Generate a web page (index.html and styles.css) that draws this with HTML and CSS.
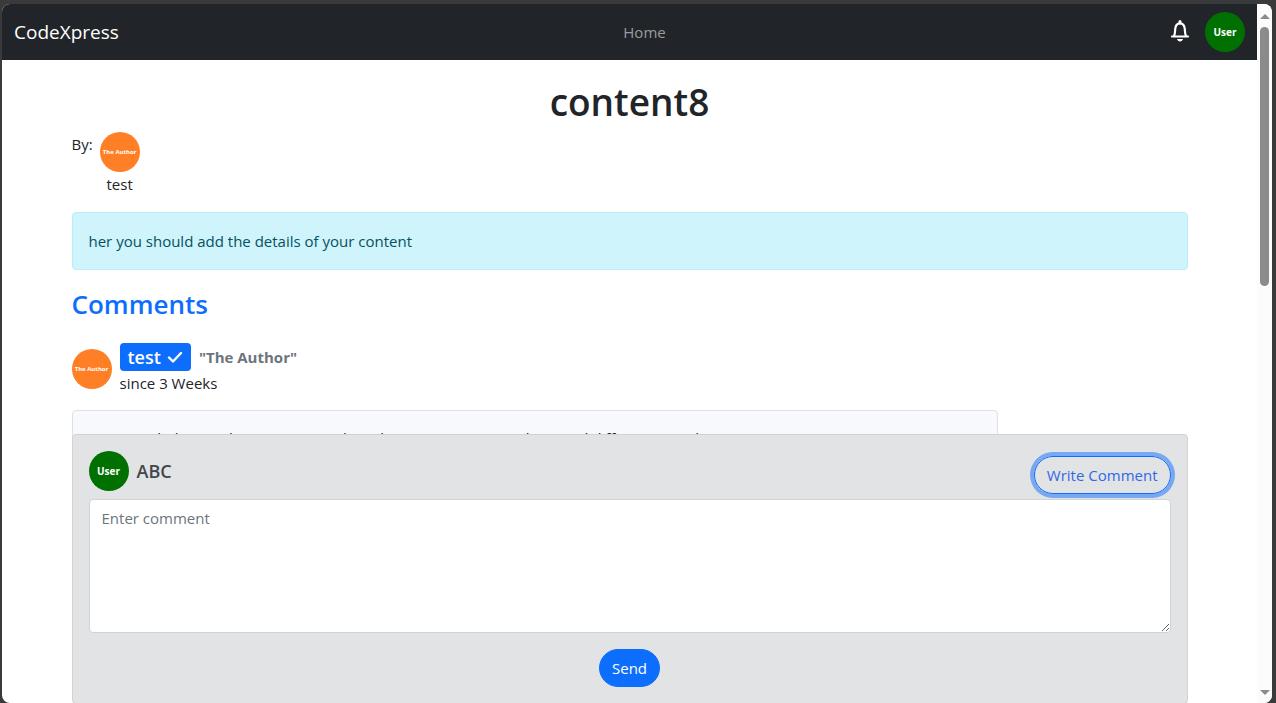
FILE: index.html
```
<!DOCTYPE html>
<html lang="en">
<head>
  <meta charset="UTF-8" />
  <meta name="viewport" content="width=device-width, initial-scale=1.0"/>
  <title>CodeXpress</title>
  <link rel="stylesheet" href="styles.css">
</head>
<body>

  <div class="window">
    <div class="page">

      <!-- Navbar -->
      <header class="navbar">
        <a href="#" class="brand">CodeXpress</a>
        <nav><a href="#" class="nav-link">Home</a></nav>
        <div class="nav-right">
          <button type="button" class="bell" aria-label="Notifications">
            <svg width="20" height="24" viewBox="0 0 20 24" fill="none" stroke="#fff" stroke-width="2.200">
              <path d="M2 16.500h16M4 16c1.100-2 1-4.200 1.200-7C5.500 5.300 7 3.300 10 3.300s4.500 2 4.800 5.700c.2 2.800.1 5 1.200 7" stroke-linecap="round"/>
              <path d="M10 1.500v1.500" stroke-width="3" stroke-linecap="round"/>
              <path d="M7 19h6c-.4 1.600-1.500 2.500-3 2.500s-2.600-.9-3-2.500z" fill="#fff" stroke="none"/>
            </svg>
          </button>
          <a href="#" class="avatar avatar-user">User</a>
        </div>
      </header>

      <!-- Content -->
      <main class="container">
        <h1>content8</h1>
        <div class="author">
          <span>By:</span>
          <a href="#" class="author-link">
            <span class="avatar avatar-author">The Author</span>
            <span>test</span>
          </a>
        </div>
        <div class="alert">her you should add the details of your content</div>

        <h2>Comments</h2>
        <article class="comment">
          <div class="comment-head">
            <span class="avatar avatar-author">The Author</span>
            <div>
              <div class="comment-name">
                <span class="badge">test
                  <svg width="16" height="14" viewBox="0 0 16 14" fill="none" stroke="#fff" stroke-width="2.400" stroke-linecap="round" stroke-linejoin="round">
                    <path d="M2 7.500l4 4L14 3"/>
                  </svg>
                </span>
                <strong>"The Author"</strong>
              </div>
              <div>since 3 Weeks</div>
            </div>
          </div>
          <p class="comment-body">you are a help even here so now we have been on many more here and different ways here</p>
        </article>
      </main>

      <!-- Comment form -->
      <div class="composer">
        <div class="container">
          <form class="composer-card">
            <div class="composer-head">
              <span class="avatar avatar-user">User</span>
              <label for="comment">ABC</label>
              <button type="button" class="btn btn-outline">Write Comment</button>
            </div>
            <textarea id="comment" rows="5" placeholder="Enter comment"></textarea>
            <button type="button" class="btn btn-primary">Send</button>
          </form>
        </div>
      </div>
    </div>

    <!-- Scrollbar -->
    <div class="scrollbar">
      <span class="arrow-up"></span>
      <span class="thumb"></span>
      <span class="arrow-down"></span>
    </div>
  </div>

</body>
</html>
```
FILE: styles.css
```
* {
  margin: 0;
  padding: 0;
  box-sizing: border-box;
}

body {
  height: 100vh;
  padding: 4px 4px 0 2px;
  overflow: hidden;
  background: #3a3a3a;
  color: #212529;
  font-family: 'Open Sans', sans-serif;
  font-size: 15px;
  line-height: 24px;
}

a {
  color: inherit;
  text-decoration: none;
}

.window {
  height: 100%;
  display: flex;
  overflow: hidden;
  border-radius: 8px;
  background: white;
}

.page {
  flex: 1;
  position: relative;
  overflow: hidden;
}

/* Navbar */
.navbar {
  height: 56px;
  padding: 0 12px;
  display: grid;
  grid-template-columns: 1fr auto 1fr;
  align-items: center;
  background: #212529;
  color: white;
}

.brand {
  font-size: 19px;
}

.nav-link {
  margin-left: 30px;
  color: #9b9d9e;
}

.nav-right {
  display: flex;
  align-items: center;
  justify-content: flex-end;
  gap: 15px;
}

.bell {
  display: flex;
  border: none;
  background: none;
  cursor: pointer;
}

.avatar {
  width: 40px;
  height: 40px;
  flex: none;
  display: flex;
  align-items: center;
  justify-content: center;
  border-radius: 50%;
  color: white;
  font-weight: 700;
  white-space: nowrap;
}

.avatar-user {
  background: #007000;
  font-size: 10px;
}

.avatar-author {
  background: #ff7f27;
  font-size: 6px;
  line-height: 8px;
}

/* Content */
.container {
  max-width: 1140px;
  margin: 0 auto;
  padding: 0 12px;
}

h1 {
  padding-top: 18px;
  margin-bottom: 6px;
  font-size: 37px;
  line-height: 48px;
  font-weight: 600;
  text-align: center;
}

.author {
  display: flex;
  gap: 7px;
}

.author-link {
  display: flex;
  flex-direction: column;
  align-items: center;
}

.alert {
  margin: 16px 0;
  padding: 16px;
  border: 1px solid #b6effb;
  border-radius: 4px;
  background: #cff4fc;
  color: #055160;
}

h2 {
  margin-bottom: 21px;
  color: #0d6efd;
  font-size: 26px;
  line-height: 36px;
  font-weight: 600;
}

.comment-head {
  display: flex;
  align-items: center;
  gap: 8px;
}

.comment-name {
  display: flex;
  align-items: center;
  gap: 8px;
}

.comment-name strong {
  color: #6c757d;
}

.badge {
  display: flex;
  align-items: center;
  gap: 6px;
  padding: 2px 8px;
  border-radius: 4px;
  background: #0d6efd;
  color: white;
  font-size: 18px;
  font-weight: 600;
}

.comment-body {
  width: 83%;
  margin-top: 15px;
  padding: 15px 16px;
  border: 1px solid #dee2e6;
  border-radius: 4px;
  background: #f7f9fc;
}

/* Comment form, stays over the page content */
.composer {
  position: absolute;
  left: 0;
  right: 0;
  bottom: -1px;
}

.composer-card {
  display: flex;
  flex-direction: column;
  padding: 16px;
  border: 1px solid #d0d2d5;
  border-radius: 4px;
  background: #e2e3e5;
}

.composer-head {
  display: flex;
  align-items: flex-start;
  gap: 8px;
}

.composer-head label {
  flex: 1;
  color: #41464b;
  font-size: 18px;
  line-height: 40px;
  font-weight: 600;
}

textarea {
  width: 100%;
  padding: 6px 12px;
  border: 1px solid #ced4da;
  border-radius: 4px;
  background: white;
  color: #212529;
  font: inherit;
}

textarea::placeholder {
  color: #6c757d;
}

.btn {
  padding: 6px 12px;
  border: 1px solid #0d6efd;
  border-radius: 20px;
  font: inherit;
  cursor: pointer;
}

.btn-outline {
  margin: 5px 0;
  background: transparent;
  color: #2f69e6;
  box-shadow: 0 0 0 4px #78a8f1;
}

.btn-primary {
  align-self: center;
  margin-top: 16px;
  background: #0d6efd;
  color: white;
}

/* Scrollbar */
.scrollbar {
  width: 15px;
  display: flex;
  flex-direction: column;
  align-items: center;
  padding: 10px 0 8px;
  background: #fcfcfc;
}

.arrow-up,
.arrow-down {
  border: 5px solid transparent;
}

.arrow-up {
  border-top: none;
  border-bottom: 5px solid #8b8b8b;
}

.arrow-down {
  margin-top: auto;
  border-bottom: none;
  border-top: 5px solid #8b8b8b;
}

.thumb {
  width: 9px;
  height: 38%;
  margin-top: 8px;
  border-radius: 5px;
  background: #8b8b8b;
}
```
